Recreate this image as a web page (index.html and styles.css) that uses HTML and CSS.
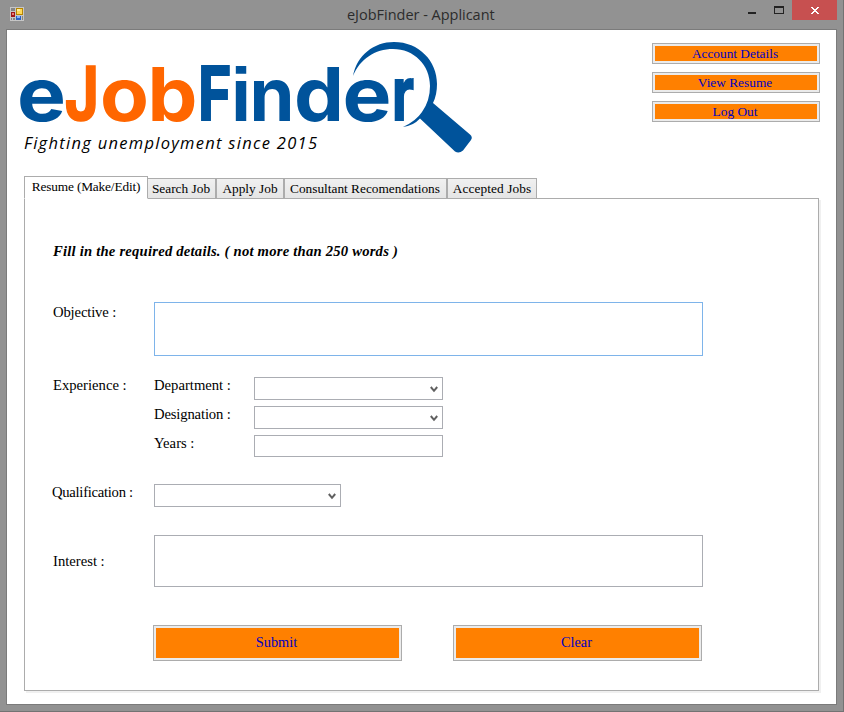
FILE: index.html
```html
<!DOCTYPE html>
<html lang="en">
<head>
<meta charset="utf-8">
<title>eJobFinder - Applicant</title>
<link rel="stylesheet" href="styles.css">
</head>
<body>
<div class="window">
  <header class="titlebar">
    <svg class="app-icon" width="14" height="14" viewBox="0 0 14 14" shape-rendering="crispEdges">
      <rect width="14" height="14" fill="#c6c6c6"/>
      <rect x="1" y="1" width="4" height="3" fill="#858585"/>
      <rect x="1" y="5" width="4" height="5" fill="#a01818"/><rect x="2" y="6" width="2" height="2" fill="#e88078"/>
      <rect x="6" y="1" width="7" height="7" fill="#b78600"/><rect x="7" y="2" width="5" height="5" fill="#ffd95a"/><rect x="7" y="2" width="3" height="2" fill="#ffeda0"/>
      <rect x="6" y="9" width="5" height="4" fill="#2b62c4"/><rect x="7" y="9" width="3" height="2" fill="#86b4fa"/>
      <path d="M1 11h1v2H1zM3 11h2v2H3zM12 9h1v4h-1z" fill="#858585"/>
    </svg>
    <h1 class="title">eJobFinder - Applicant</h1>
    <div class="controls">
      <span class="control"><svg width="8" height="2"><rect width="8" height="2" fill="#222"/></svg></span>
      <span class="control maximize"><svg width="10" height="8" shape-rendering="crispEdges"><path d="M0 0h10v8H0zM1 2v5h8V2z" fill="#222" fill-rule="evenodd"/></svg></span>
      <span class="control close"><svg width="8" height="7" shape-rendering="crispEdges"><path d="M0 0h2v1h1v1h2V1h1V0h2v1H7v1H6v1H5v1h1v1h1v1h1v1H6V6H5V5H3v1H2v1H0V6h1V5h1V4h1V3H2V2H1V1H0z" fill="#fff"/></svg></span>
    </div>
  </header>
  <main class="client">
    <div class="top">
      <svg class="logo" width="456" height="120" viewBox="18 38 456 120" role="img" aria-label="eJobFinder">
        <text class="wordmark blue" y="120.5"><tspan x="17" textLength="49" lengthAdjust="spacingAndGlyphs">e</tspan><tspan class="orange heavy-orange" x="64.500" y="120" textLength="34.500" lengthAdjust="spacingAndGlyphs">J</tspan><tspan class="orange" x="100" y="120.5" textLength="49" lengthAdjust="spacingAndGlyphs">o</tspan><tspan class="orange" x="147.5" textLength="50" lengthAdjust="spacingAndGlyphs">b</tspan><tspan class="heavy-blue" x="198" y="119.5" textLength="33.500" lengthAdjust="spacingAndGlyphs">F</tspan><tspan class="square" x="230.5" y="120.5">i</tspan><tspan x="249.500" textLength="45" lengthAdjust="spacingAndGlyphs">n</tspan><tspan x="294" textLength="50" lengthAdjust="spacingAndGlyphs">d</tspan><tspan x="342.500" textLength="49" lengthAdjust="spacingAndGlyphs">e</tspan><tspan class="heavy-blue" x="392" y="119.5" textLength="22" lengthAdjust="spacingAndGlyphs">r</tspan></text>
        <path fill="#00539b" d="M353 76C357 55 374 42 394 42C419 42 437 61 437 84Q437 95 433 103L470 134.500Q473 137 471 140L463 150.500Q459 154 455 151.500L420 118.500Q413 126 403 127Q416 121 422 112Q430 101 430 86C430 65 414 49 393 49C375 49 360 59 353 76Z"/>
        <text class="tagline" x="24" y="149" textLength="293" lengthAdjust="spacing">Fighting unemployment since 2015</text>
      </svg>
      <nav class="account">
        <button class="btn small">Account Details</button>
        <button class="btn small">View Resume</button>
        <button class="btn small">Log Out</button>
      </nav>
    </div>
    <div class="tabs">
      <div class="tab active"><span>Resume (Make/Edit)</span></div>
      <div class="tab search">Search Job</div>
      <div class="tab apply">Apply Job</div>
      <div class="tab consultant">Consultant Recomendations</div>
      <div class="tab accepted">Accepted Jobs</div>
    </div>
    <form class="panel">
      <p class="hint">Fill in the required details. ( not more than 250 words )</p>
      <div class="row objective"><label>Objective :</label><textarea class="field focused"></textarea></div>
      <div class="row experience">
        <label>Experience :</label>
        <div class="subrows">
          <div class="subrow"><label>Department :</label><div class="field select"><svg class="chevron" width="8" height="7"><path d="M.8 1 4 4.800 7.200 1" /></svg></div></div>
          <div class="subrow designation"><label>Designation :</label><div class="field select"><svg class="chevron" width="8" height="7"><path d="M.8 1 4 4.800 7.200 1" /></svg></div></div>
          <div class="subrow"><label>Years :</label><input class="field years"></div>
        </div>
      </div>
      <div class="row qualification"><label>Qualification :</label><div class="field select"><svg class="chevron" width="8" height="7"><path d="M.8 1 4 4.800 7.200 1" /></svg></div></div>
      <div class="row interest"><label>Interest :</label><textarea class="field"></textarea></div>
      <div class="actions"><button type="button" class="btn">Submit</button><button type="button" class="btn">Clear</button></div>
    </form>
  </main>
</div>
</body>
</html>
```
FILE: styles.css
```css
* { box-sizing: border-box; }
body { margin: 0; font-family: "Liberation Serif", serif; color: #000; }
.window {
  width: 844px; height: 712px; padding: 0 7px 7px 6px;
  background: #929292; border-right: 1px solid #737373; border-bottom: 1px solid #737373;
}
.titlebar { display: flex; height: 29px; }
.app-icon { margin: 7px 0 0 4px; flex: none; }
.title {
  margin: 0 0 0 323px; width: 150px; white-space: nowrap;
  font: 400 14.500px/29px "Open Sans", sans-serif; color: #2c2c2c; letter-spacing: -.02px;
}
.controls { display: flex; margin: 0 -1px 0 auto; height: 20px; }
.control { width: 27px; display: flex; align-items: center; justify-content: center; }
.control:first-child { padding-top: 6px; }
.control.close { width: 45px; background: #c75050; }
.client {
  width: 831px; height: 676px; background: #fff; border: 1px solid #7b7b7b;
  padding: 8px 17px 0;
}
.top { display: flex; justify-content: space-between; height: 138px; }
.logo { margin-left: -6px; flex: none; }
.wordmark { font: 700 74px "Inter", sans-serif; }
.square { font: 700 76px "Liberation Sans", sans-serif; }
.blue { fill: #00539b; }
.orange { fill: #ff6600; }
.heavy-orange { stroke: #ff6600; stroke-width: 1.500px; }
.heavy-blue { stroke: #00539b; stroke-width: 1.800px; }
.tagline { font: italic 400 16.500px "Open Sans", sans-serif; fill: #000; }
.account { display: flex; flex-direction: column; gap: 8px; width: 168px; margin: 5px -1px 0 0; }
.btn {
  display: block; margin: 0; width: 249px; height: 36px; padding: 0 2px 2px 0;
  border: 1px solid #acacac; background: #ff8000; box-shadow: inset 0 0 0 2px #ebebeb;
  font: 14.300px/32px "Liberation Serif", serif; color: #0000c0; text-align: center;
}
.btn.small { width: 168px; height: 21px; font-size: 13.330px; line-height: 19px; padding: 0 2px 0 0; }
.tabs { display: flex; align-items: flex-end; height: 23px; margin-bottom: -1px; position: relative; font-size: 13.330px; }
.tab {
  height: 21px; line-height: 20px; text-align: center; white-space: nowrap;
  border: 1px solid #acacac; background: linear-gradient(#f0f0f0, #e5e5e5);
}
.tab.active { width: 124px; height: 23px; background: #fff; border-bottom-color: #fff; letter-spacing: -.16px; }
.search { width: 68px; border-left: 0; padding-right: 1px; }
.apply { width: 68px; }
.consultant { width: 163px; padding-right: 1px; }
.accepted { width: 90px; letter-spacing: .1px; }
.panel {
  width: 795px; height: 493px; padding: 44px 0 0 27px;
  border: 1px solid #acacac; box-shadow: 2px 2px 0 #f0f0f0; font-size: 14.670px; line-height: 17px;
}
.hint { margin: 0 0 42px 1px; font-weight: bold; font-style: italic; white-space: nowrap; letter-spacing: .21px; }
.row { display: flex; }
.row > label { width: 101px; padding-left: 1px; margin-right: 1px; flex: none; }
.field {
  display: flex; margin: 0; padding: 0; border: 1px solid #abadb3; border-radius: 0;
  background: #fff; outline: 0; resize: none; flex: none;
}
textarea.field { width: 549px; height: 52px; }
textarea.focused { height: 54px; border-color: #7eb4ea; }
.select { height: 23px; width: 189px; align-items: center; justify-content: flex-end; padding: 1px 4px 0 0; }
.chevron { fill: none; stroke: #606060; stroke-width: 2; }
.objective { margin-bottom: 21px; }
.objective > label { padding-top: 2px; letter-spacing: -.15px; }
.subrows { display: flex; flex-direction: column; gap: 6px; }
.subrow { display: flex; }
.subrow label { width: 100px; }
.designation { letter-spacing: -.15px; }
.years { width: 189px; height: 22px; }
.qualification { margin-top: 27px; }
.qualification > label { padding-left: 0; letter-spacing: -.28px; }
.qualification .select { width: 187px; }
.interest { margin-top: 28px; }
.interest > label { padding-top: 18px; }
.actions { display: flex; gap: 51px; margin: 38px 0 0 101px; }
```
